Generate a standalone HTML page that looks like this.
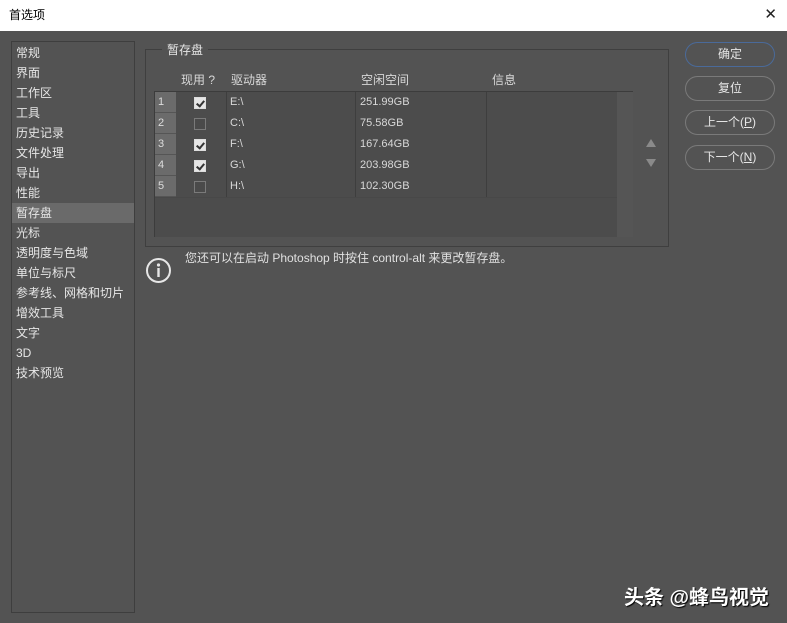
<!DOCTYPE html>
<html><head><meta charset="utf-8"><style>
*{margin:0;padding:0;box-sizing:border-box}
body{width:787px;height:623px;background:#535353;position:relative;overflow:hidden;font-family:"Liberation Sans","Noto Sans CJK SC",sans-serif;color:#e0e0e0;font-size:12px}
.a{position:absolute}
.title{left:0;top:0;width:787px;height:31px;background:#fff;color:#000;font-size:12px;line-height:31px;padding-left:9px}
.close{right:10px;top:6px;font-size:15px;color:#222;line-height:18px;font-weight:300}
.side{left:11px;top:41px;width:124px;height:572px;border:1px solid #3e3e3e;background:#535353}
.side div{height:20px;line-height:20px;padding-left:4px;font-size:12px;color:#e6e6e6}
.side .sel{background:#6a6a6a}
.grp{left:145px;top:49px;width:524px;height:198px;border:1px solid #3f3f3f}
.gl{left:162px;top:41px;background:#535353;padding:0 5px;font-size:12px;color:#e6e6e6}
.tbl{left:154px;top:91px;width:479px;height:146px;background:#4c4c4c;border-top:1px solid #3c3c3c;border-left:1px solid #3c3c3c}
.row{left:0;height:21px;width:462px}
.num{left:0;width:21px;height:21px;background:#6b6b6b;border-bottom:1px solid #555;font-size:11px;line-height:20px;padding-left:3px;color:#ddd}
.cb{left:39px;top:5px;width:12px;height:12px;border:1px solid #7a7a7a;background:#4a4a4a}
.cb.on{background:#e6e6e6;border-color:#ddd}
.cb.on:after{content:"";position:absolute;left:3px;top:1px;width:3px;height:6px;border:solid #333;border-width:0 2px 2px 0;transform:rotate(40deg)}
.t{font-size:11px;line-height:21px;color:#d8d8d8}
.vl{width:1px;background:#3e3e3e;top:0;height:105px}
.hd{top:71px;font-size:12px;color:#d8d8d8}
.btn{left:685px;width:90px;height:25px;border:1.5px solid #7a7a7a;border-radius:13px;text-align:center;line-height:22px;font-size:12px;color:#e6e6e6}
</style></head><body>
<div class="a title">首选项</div>
<div class="a close">✕</div>
<div class="a side">
<div style="margin-top:1px">常规</div><div>界面</div><div>工作区</div><div>工具</div><div>历史记录</div><div>文件处理</div><div>导出</div><div>性能</div><div class="sel">暂存盘</div><div>光标</div><div>透明度与色域</div><div>单位与标尺</div><div>参考线、网格和切片</div><div>增效工具</div><div>文字</div><div>3D</div><div>技术预览</div>
</div>
<div class="a grp"></div>
<div class="a gl">暂存盘</div>
<div class="a hd" style="left:181px">现用 ?</div>
<div class="a hd" style="left:231px">驱动器</div>
<div class="a hd" style="left:361px">空闲空间</div>
<div class="a hd" style="left:492px">信息</div>
<div class="a tbl">
<div class="a" style="left:462px;top:0;width:16px;height:145px;background:#555"></div>
<div class="a" style="left:0;top:105px;width:462px;height:1px;background:#484848"></div>
<div class="a vl" style="left:71px"></div>
<div class="a vl" style="left:200px"></div>
<div class="a vl" style="left:331px"></div>
<div class="a row" style="top:0"><div class="a num">1</div><div class="a cb on"></div><div class="a t" style="left:75px">E:\</div><div class="a t" style="left:205px">251.99GB</div></div>
<div class="a row" style="top:21px"><div class="a num">2</div><div class="a cb"></div><div class="a t" style="left:75px">C:\</div><div class="a t" style="left:205px">75.58GB</div></div>
<div class="a row" style="top:42px"><div class="a num">3</div><div class="a cb on"></div><div class="a t" style="left:75px">F:\</div><div class="a t" style="left:205px">167.64GB</div></div>
<div class="a row" style="top:63px"><div class="a num">4</div><div class="a cb on"></div><div class="a t" style="left:75px">G:\</div><div class="a t" style="left:205px">203.98GB</div></div>
<div class="a row" style="top:84px"><div class="a num">5</div><div class="a cb"></div><div class="a t" style="left:75px">H:\</div><div class="a t" style="left:205px">102.30GB</div></div>
</div>
<div class="a" style="left:646px;top:139px;width:0;height:0;border-left:5px solid transparent;border-right:5px solid transparent;border-bottom:8px solid #8a8a8a"></div>
<div class="a" style="left:646px;top:159px;width:0;height:0;border-left:5px solid transparent;border-right:5px solid transparent;border-top:8px solid #8a8a8a"></div>
<svg class="a" style="left:145px;top:257px" width="27" height="27"><circle cx="13.5" cy="13.5" r="11.5" fill="none" stroke="#e6e6e6" stroke-width="2"/><circle cx="13.5" cy="8" r="1.6" fill="#e6e6e6"/><rect x="12.3" y="11" width="2.4" height="9" fill="#e6e6e6"/></svg>
<div class="a" style="left:185px;top:249px;font-size:12px;color:#e0e0e0">您还可以在启动 Photoshop 时按住 control-alt 来更改暂存盘。</div>
<div class="a btn" style="top:42px;border-color:#4a6a9a">确定</div>
<div class="a btn" style="top:76px">复位</div>
<div class="a btn" style="top:110px">上一个(<u>P</u>)</div>
<div class="a btn" style="top:145px">下一个(<u>N</u>)</div>
<div class="a" style="left:624px;top:581px;font-size:20px;font-weight:bold;color:#fff;text-shadow:1px 1px 1px #000">头条 @蜂鸟视觉</div>
</body></html>
